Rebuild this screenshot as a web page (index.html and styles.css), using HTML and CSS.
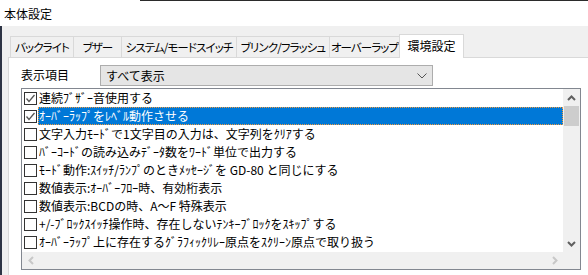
FILE: index.html
```html
<!DOCTYPE html>
<html lang="ja">
<head>
<meta charset="utf-8">
<link rel="stylesheet" href="styles.css">
</head>
<body>
<div class="titlebar">
  <div class="topline"></div>
  <div class="title">本体設定</div>
</div>
<div class="window">
  <div class="edge"></div>
  <div class="content">
    <div class="tabs">
      <div class="tab t1">バックライト</div>
      <div class="tab t2">ブザー</div>
      <div class="tab t3">システム/モードスイッチ</div>
      <div class="tab t4">ブリンク/フラッシュ</div>
      <div class="tab t5">オーバーラップ</div>
      <div class="tab sel">環境設定</div>
    </div>
    <div class="panel">
      <div class="filter">
        <span class="lbl">表示項目</span>
        <div class="combo">
          <span>すべて表示</span>
          <svg class="chev" width="10" height="6" viewBox="0 0 10 6"><polyline points="0.5,0.5 5,5 9.5,0.5" fill="none" stroke="#555" stroke-width="1"/></svg>
        </div>
      </div>
      <div class="list">
        <div class="items">
          <div class="item"><span class="cb"><svg width="11" height="11" viewBox="0 0 11 11"><polyline points="1.5,5.5 4,8.5 9.5,2" fill="none" stroke="#555" stroke-width="1.3"/></svg></span><span class="txt">連続ﾌﾞｻﾞｰ音使用する</span></div>
          <div class="item"><span class="cb"><svg width="11" height="11" viewBox="0 0 11 11"><polyline points="1.5,5.5 4,8.5 9.5,2" fill="none" stroke="#555" stroke-width="1.3"/></svg></span><span class="txt selected">ｵｰﾊﾞｰﾗｯﾌﾟをﾚﾍﾞﾙ動作させる</span></div>
          <div class="item"><span class="cb"></span><span class="txt">文字入力ﾓｰﾄﾞで1文字目の入力は、文字列をｸﾘｱする</span></div>
          <div class="item"><span class="cb"></span><span class="txt">ﾊﾞｰｺｰﾄﾞの読み込みﾃﾞｰﾀ数をﾜｰﾄﾞ単位で出力する</span></div>
          <div class="item"><span class="cb"></span><span class="txt">ﾓｰﾄﾞ動作:ｽｲｯﾁ/ﾗﾝﾌﾟのときﾒｯｾｰｼﾞを GD-80 と同じにする</span></div>
          <div class="item"><span class="cb"></span><span class="txt">数値表示:ｵｰﾊﾞｰﾌﾛｰ時、有効桁表示</span></div>
          <div class="item"><span class="cb"></span><span class="txt">数値表示:BCDの時、A～F 特殊表示</span></div>
          <div class="item"><span class="cb"></span><span class="txt">+/-ﾌﾞﾛｯｸｽｲｯﾁ操作時、存在しないﾃﾝｷｰﾌﾞﾛｯｸをｽｷｯﾌﾟする</span></div>
          <div class="item"><span class="cb"></span><span class="txt">ｵｰﾊﾞｰﾗｯﾌﾟ上に存在するｸﾞﾗﾌｨｯｸﾘﾚｰ原点をｽｸﾘｰﾝ原点で取り扱う</span></div>
        </div>
        <div class="vscroll">
          <div class="sbtn"><svg width="9" height="6" viewBox="0 0 9 6"><polyline points="1,5 4.5,1.5 8,5" fill="none" stroke="#606060" stroke-width="2"/></svg></div>
          <div class="thumb"></div>
          <div class="vspace"></div>
          <div class="sbtn"><svg width="9" height="6" viewBox="0 0 9 6"><polyline points="1,1 4.5,4.5 8,1" fill="none" stroke="#606060" stroke-width="2"/></svg></div>
        </div>
        <div class="hscroll">
          <div class="sbtn"><svg width="6" height="9" viewBox="0 0 6 9"><polyline points="5,1 1.5,4.5 5,8" fill="none" stroke="#c8c8c8" stroke-width="2"/></svg></div>
          <div class="sbtn"><svg width="6" height="9" viewBox="0 0 6 9"><polyline points="1,1 4.5,4.5 1,8" fill="none" stroke="#c8c8c8" stroke-width="2"/></svg></div>
        </div>
        <div class="corner"></div>
      </div>
    </div>
  </div>
</div>
</body>
</html>
```
FILE: styles.css
```css
html, body {
  margin: 0;
  padding: 0;
}
body {
  width: 588px;
  height: 275px;
  overflow: hidden;
  background: #f0f0f0;
  font-family: "Noto Sans CJK JP", "Noto Sans", sans-serif;
  font-size: 12px;
  color: #000;
}
.titlebar {
  height: 26px;
  background: #fff;
}
.topline {
  height: 1px;
  margin-left: 140px;
  background: #2b2b2b;
}
.title {
  height: 25px;
  display: flex;
  align-items: center;
  padding-left: 4px;
  font-size: 12px;
}
.window {
  display: flex;
  height: 249px;
}
.edge {
  width: 2px;
  background: #2e3445;
}
.content {
  flex: 1;
  display: flex;
  flex-direction: column;
  padding: 8px 0 0 6px;
  min-width: 0;
}
.tabs {
  display: flex;
  align-items: flex-end;
  height: 23px;
  padding-left: 2px;
}
.tab {
  box-sizing: border-box;
  height: 21px;
  border: 1px solid #d9d9d9;
  border-bottom: none;
  background: #f0f0f0;
  display: flex;
  align-items: center;
  justify-content: center;
  font-size: 11.5px;
  letter-spacing: -0.9px;
  font-feature-settings: "palt";
  white-space: nowrap;
  margin-left: -1px;
  padding-bottom: 1px;
  overflow: hidden;
}
.t1 { width: 64px; margin-left: 0; }
.t2 { width: 49px; }
.t3 { width: 116px; }
.t4 { width: 94px; }
.t5 { width: 71px; }
.tab.sel {
  width: 65px;
  height: 24px;
  margin-bottom: -1px;
  background: #fff;
  position: relative;
  z-index: 1;
  padding-bottom: 2px;
  font-size: 12px;
  letter-spacing: 0;
  font-feature-settings: normal;
}
.panel {
  flex: 1;
  background: #fff;
  border-left: 1px solid #d9d9d9;
  border-top: 1px solid #d9d9d9;
  padding: 7px 0 0 12px;
}
.filter {
  display: flex;
  align-items: center;
  height: 21px;
}
.lbl {
  width: 79px;
  padding-bottom: 3px;
}
.combo {
  box-sizing: border-box;
  width: 333px;
  height: 21px;
  border: 1px solid #adadad;
  background: #e5e5e5;
  display: flex;
  align-items: center;
  justify-content: space-between;
  padding: 0 5px 0 5px;
}
.combo span {
  padding-bottom: 1px;
}
.list {
  box-sizing: border-box;
  margin-top: 2px;
  width: 560px;
  height: 182px;
  border: 1px solid #828790;
  background: #fff;
  display: grid;
  grid-template-columns: 541px 17px;
  grid-template-rows: 163px 17px;
}
.items {
  overflow: hidden;
}
.item {
  display: flex;
  align-items: center;
  height: 18px;
}
.cb {
  box-sizing: border-box;
  width: 13px;
  height: 13px;
  margin-left: 2px;
  border: 1px solid #333;
  background: #fff;
  display: flex;
  align-items: center;
  justify-content: center;
  flex: none;
}
.cb svg {
  display: block;
}
.txt {
  box-sizing: border-box;
  flex: 1;
  height: 18px;
  margin-left: 1px;
  padding-left: 0;
  border: 1px solid transparent;
  line-height: 15px;
  white-space: nowrap;
  overflow: hidden;
}
.txt.selected {
  background: #0078d7;
  color: #fff;
  border: 1px dotted #f09a3e;
}
.vscroll {
  background: #f0f0f0;
  display: flex;
  flex-direction: column;
}
.sbtn {
  width: 17px;
  height: 17px;
  display: flex;
  align-items: center;
  justify-content: center;
  flex: none;
}
.thumb {
  height: 20px;
  margin: 0 1px;
  background: #cdcdcd;
}
.vspace {
  flex: 1;
}
.hscroll {
  background: #f0f0f0;
  display: flex;
  justify-content: space-between;
}
.corner {
  background: #f0f0f0;
}
```
